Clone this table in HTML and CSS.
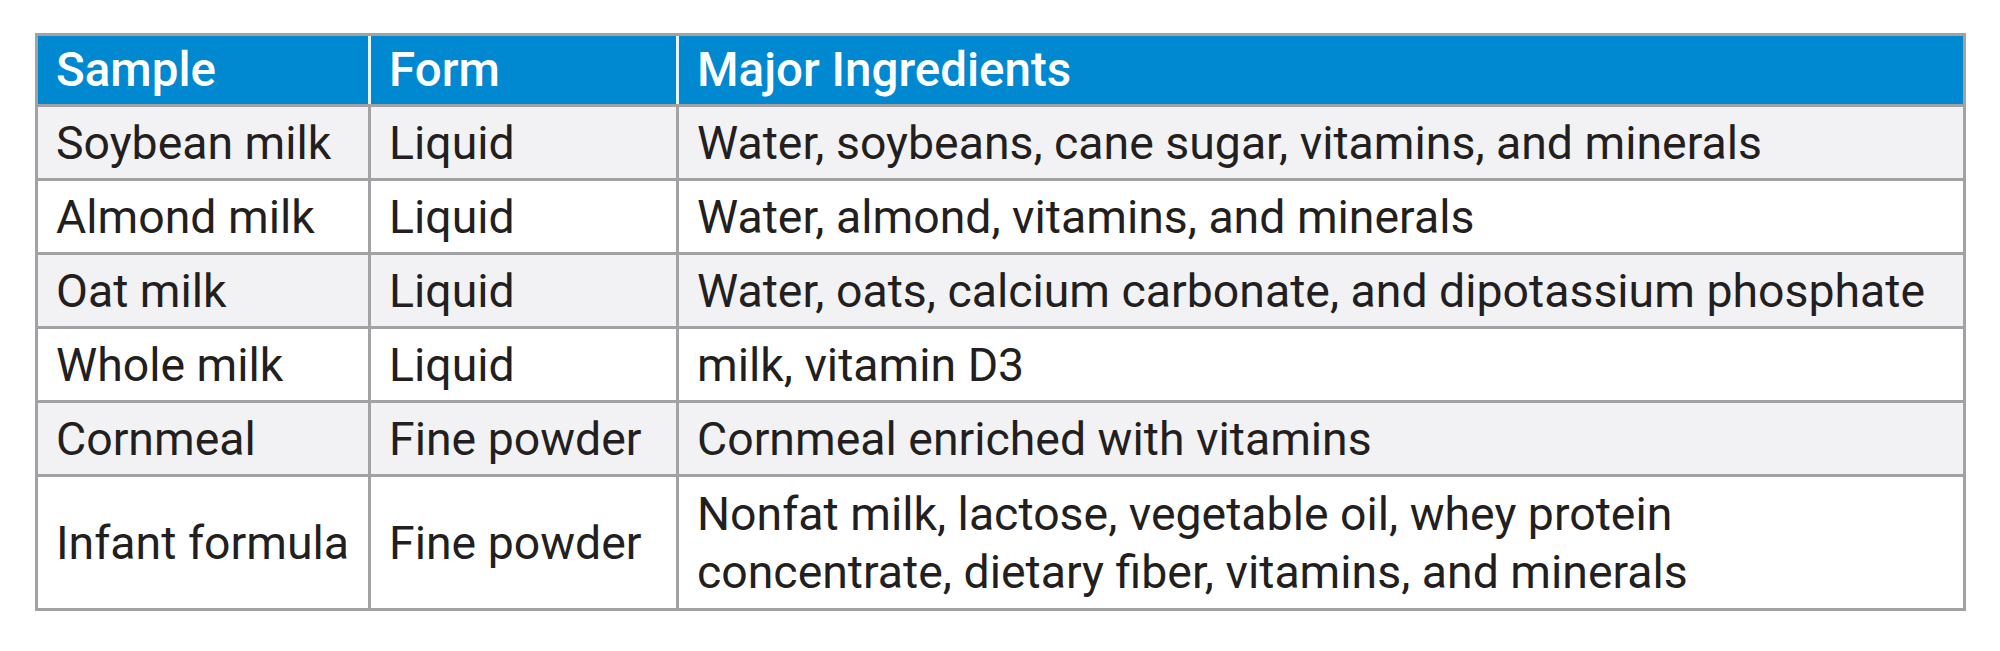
FILE: index.html
```html
<!DOCTYPE html>
<html>
<head>
<meta charset="utf-8">
<link rel="stylesheet" href="styles.css">
</head>
<body>
<div class="page">
<table class="samples">
  <colgroup>
    <col class="c1"><col class="c2"><col class="c3">
  </colgroup>
  <thead>
    <tr><th>Sample</th><th>Form</th><th>Major Ingredients</th></tr>
  </thead>
  <tbody>
    <tr class="alt"><td>Soybean milk</td><td>Liquid</td><td>Water, soybeans, cane sugar, vitamins, and minerals</td></tr>
    <tr><td>Almond milk</td><td>Liquid</td><td>Water, almond, vitamins, and minerals</td></tr>
    <tr class="alt"><td>Oat milk</td><td>Liquid</td><td>Water, oats, calcium carbonate, and dipotassium phosphate</td></tr>
    <tr><td>Whole milk</td><td>Liquid</td><td>milk, vitamin D3</td></tr>
    <tr class="alt"><td>Cornmeal</td><td>Fine powder</td><td>Cornmeal enriched with vitamins</td></tr>
    <tr class="tall"><td>Infant formula</td><td>Fine powder</td><td>Nonfat milk, lactose, vegetable oil, whey protein<br>concentrate, dietary fiber, vitamins, and minerals</td></tr>
  </tbody>
</table>
</div>
</body>
</html>
```

FILE: styles.css
```css
html, body {
  margin: 0;
  padding: 0;
  background: #ffffff;
}
.page {
  padding: 33px 0 0 35px;
}
.samples {
  border-collapse: collapse;
  table-layout: fixed;
  width: 1931px;
  font-family: Roboto, "Liberation Sans", sans-serif;
  font-size: 46.4px;
  color: #231f20;
  border: 3px solid #a2a2a4;
}
.c1 { width: 333px; }
.c2 { width: 308px; }
.c3 { width: auto; }
.samples th,
.samples td {
  text-align: left;
  vertical-align: middle;
  padding: 0 0 0 18px;
  line-height: 58px;
  white-space: nowrap;
}
.samples th {
  background: #0089d0;
  color: #ffffff;
  font-size: 47.5px;
  font-weight: 500;
  height: 68px;
  border-top: 3px solid #a2a2a4;
  border-bottom: 3px solid #a2a2a4;
  border-left: 3px solid #e6f4fb;
}
.samples th:first-child {
  border-left: 3px solid #a2a2a4;
}
.samples td {
  height: 71px;
  border: 3px solid #a2a2a4;
}
.samples tr.alt td {
  background: #f2f2f4;
}
.samples tr.tall td {
  height: 131px;
}
```
